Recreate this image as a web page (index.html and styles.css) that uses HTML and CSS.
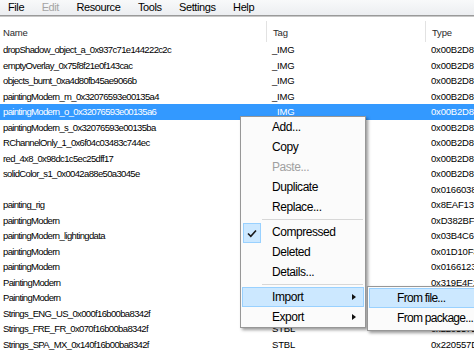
FILE: index.html
```html
<!DOCTYPE html>
<html lang="en">
<head>
    <meta charset="UTF-8">
    <meta name="viewport" content="width=device-width, initial-scale=1.0">
    <title>Package Editor</title>
    <link rel="stylesheet" href="styles.css">
</head>
<body>

    <div class="menubar">
        <span>File</span>
        <span class="off">Edit</span>
        <span>Resource</span>
        <span>Tools</span>
        <span>Settings</span>
        <span>Help</span>
    </div>

    <div class="list">
        <div class="row head"><span>Name</span><span>Tag</span><span>Type</span></div>
        <div class="row"><span>dropShadow_object_a_0x937c71e144222c2c</span><span>_IMG</span><span>0x00B2D8BA</span></div>
        <div class="row"><span>emptyOverlay_0x75f8f21e0f143cac</span><span>_IMG</span><span>0x00B2D8BA</span></div>
        <div class="row"><span>objects_burnt_0xa4d80fb45ae9066b</span><span>_IMG</span><span>0x00B2D8BA</span></div>
        <div class="row"><span>paintingModern_m_0x32076593e00135a4</span><span>_IMG</span><span>0x00B2D8BA</span></div>
        <div class="row selected"><span>paintingModern_o_0x32076593e00135a6</span><span>_IMG</span><span>0x00B2D8BA</span></div>
        <div class="row"><span>paintingModern_s_0x32076593e00135ba</span><span>_IMG</span><span>0x00B2D8BA</span></div>
        <div class="row"><span>RChannelOnly_1_0x6f04c03483c744ec</span><span>_IMG</span><span>0x00B2D8BA</span></div>
        <div class="row"><span>red_4x8_0x98dc1c5ec25dff17</span><span>_IMG</span><span>0x00B2D8BA</span></div>
        <div class="row"><span>solidColor_s1_0x0042a88e50a3045e</span><span>_IMG</span><span>0x00B2D8BA</span></div>
        <div class="row"><span></span><span>COBJ</span><span>0x0166038C</span></div>
        <div class="row"><span>painting_rig</span><span>_RIG</span><span>0x8EAF13DE</span></div>
        <div class="row"><span>paintingModern</span><span>FTPT</span><span>0xD382BF57</span></div>
        <div class="row"><span>paintingModern_lightingdata</span><span>LITE</span><span>0x03B4C61D</span></div>
        <div class="row"><span>paintingModern</span><span>MLOD</span><span>0x01D10F34</span></div>
        <div class="row"><span>paintingModern</span><span>MODL</span><span>0x01661233</span></div>
        <div class="row"><span>PaintingModern</span><span>OBJD</span><span>0x319E4F1D</span></div>
        <div class="row"><span>PaintingModern</span><span>OBJD</span><span>0xC0DB5AE7</span></div>
        <div class="row"><span>Strings_ENG_US_0x000f16b00ba8342f</span><span>STBL</span><span>0x220557DA</span></div>
        <div class="row"><span>Strings_FRE_FR_0x070f16b00ba8342f</span><span>STBL</span><span>0x220557DA</span></div>
        <div class="row"><span>Strings_SPA_MX_0x140f16b00ba8342f</span><span>STBL</span><span>0x220557DA</span></div>
    </div>

    <div class="ctx">
        <div class="item">Add...</div>
        <div class="item">Copy</div>
        <div class="item off">Paste...</div>
        <div class="item">Duplicate</div>
        <div class="item">Replace...</div>
        <div class="sep"></div>
        <div class="item">
            <span class="check">
                <svg width="10" height="9" viewBox="0 0 10 9"><path d="M1 4.5 L3.8 7.3 L9 1.5" fill="none" stroke="#1a1a1a" stroke-width="1.6"/></svg>
            </span>
            Compressed
        </div>
        <div class="item">Deleted</div>
        <div class="item">Details...</div>
        <div class="sep"></div>
        <div class="item hot more">Import</div>
        <div class="item more">Export</div>
    </div>

    <div class="ctx sub">
        <div class="item hot">From file...</div>
        <div class="item">From package...</div>
    </div>

</body>
</html>
```

FILE: styles.css
```css
body {
    margin: 0;
    background-color: #fff;
    color: #000;
    font-family: "Liberation Sans", Arial, sans-serif;
    overflow: hidden;
    position: relative;
    height: 351px;
}

.menubar {
    display: flex;
    gap: 17.5px;
    height: 15px;
    padding-left: 8px;
    font-size: 11px;
    letter-spacing: -0.4px;
    line-height: 15px;
    background: linear-gradient(#f8f9fa, #eceef1);
    border-bottom: 1px solid #9a9a9a;
    box-shadow: 0 1px 0 #c8c8c8;
}

.menubar .off {
    color: #a4a4a4;
}

.list {
    padding-top: 2px;
    font-size: 9.5px;
    letter-spacing: -0.65px;
}

.row {
    display: grid;
    grid-template-columns: 266px 159px 1fr;
    height: 15.53px;
    line-height: 15.53px;
    white-space: nowrap;
    overflow: hidden;
}

.row span {
    padding-left: 3px;
    overflow: hidden;
}

.row span + span {
    padding-left: 6px;
    letter-spacing: -0.2px;
}

.row.head {
    height: 24px;
    line-height: 15px;
    color: #2b2b2b;
    letter-spacing: -0.2px;
}

.row.head span {
    padding-top: 7px;
}

.row.head span + span {
    margin-top: 3px;
    padding-top: 4px;
    border-left: 1px solid #e2e2e2;
}

.row.selected {
    background-color: #3399ff;
    color: #fff;
}

.ctx {
    position: absolute;
    left: 240px;
    top: 116px;
    width: 124px;
    background-color: #fbfbfb;
    border: 1px solid #979797;
    box-shadow: 2px 2px 3px rgba(0, 0, 0, 0.4);
    font-size: 12px;
    letter-spacing: -0.45px;
}

.item {
    position: relative;
    height: 18px;
    line-height: 18px;
    margin: 0 1px;
    padding-left: 29px;
    border: 1px solid transparent;
    white-space: nowrap;
}

.item.off {
    color: #a0a0a0;
}

.item.hot {
    background-color: #cce8ff;
    border-color: #99d1ff;
}

.item.more::after {
    content: "";
    position: absolute;
    right: 7px;
    top: 6px;
    border-left: 4px solid #111;
    border-top: 3.5px solid transparent;
    border-bottom: 3.5px solid transparent;
}

.check {
    position: absolute;
    left: 0;
    top: 0;
    width: 16px;
    height: 18px;
    background-color: #cce8ff;
    border: 1px solid #99d1ff;
    display: flex;
    align-items: center;
    justify-content: center;
}

.sep {
    height: 1px;
    margin: 2px 2px 2px 21px;
    background-color: #d7d7d7;
}

.sub {
    left: 367px;
    top: 286px;
    width: 130px;
    padding: 1px 0 2px;
    letter-spacing: -0.7px;
}

.sub .item {
    padding-left: 27px;
}
```
